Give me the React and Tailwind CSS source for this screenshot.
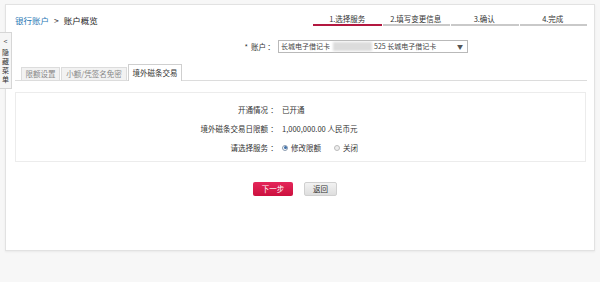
export default function App() {
  const font = { fontFamily: '"Noto Sans CJK SC", "Noto Sans", sans-serif' };
  const steps = ["1.选择服务", "2.填写变更信息", "3.确认", "4.完成"];
  return (
    <div className="relative w-[600px] h-[282px] overflow-hidden bg-[#f7f7f7] pt-[4px] px-[5px] text-[#333]" style={font}>
      {/* side hide-menu tab */}
      <div className="absolute left-0 top-[32px] w-[12px] h-[57px] bg-[#f5f5f5] border border-l-0 border-[#d6d6d6] flex flex-col items-center pt-[4px] text-[7px] leading-[9px] text-[#333] z-10">
        <span className="text-[7px] leading-[8px] text-[#555] mb-[3px]">&lt;</span>
        <span>隐</span>
        <span>藏</span>
        <span>菜</span>
        <span>单</span>
      </div>

      <div className="h-[247px] bg-white border border-[#e2e2e2] shadow-[0_1px_2px_rgba(0,0,0,0.06)]">
        {/* header */}
        <div className="h-[25px] flex items-end justify-between pl-[9px] pr-[7px]">
          <div className="text-[8.5px] leading-[12px] mb-[4px] flex items-center">
            <span className="text-[#2a78b5]">银行账户</span>
            <span className="mx-[5px] text-[#333]">&gt;</span>
            <span className="text-[#222]">账户概览</span>
          </div>
          <div className="flex w-[274px] mb-[4px]">
            {steps.map((s, i) => (
              <div key={s} className="w-[68.5px] flex flex-col items-center">
                <span className="text-[7.5px] leading-[10px] text-[#333]">{s}</span>
                <div className={i === 0 ? "w-full h-[2px] bg-[#b31840]" : "w-full h-[2px] bg-[#c9c9c9] border-l border-white"} />
              </div>
            ))}
          </div>
        </div>

        {/* account row */}
        <div className="mt-[10px] flex items-center h-[13px] text-[7.5px]">
          <div className="w-[260px] text-right"><span className="mr-[3px]">*</span>账户</div>
          <div className="w-[10px] text-center">：</div>
          <div className="ml-[2px] w-[190px] h-[13px] border border-[#b9b9b9] flex items-center pl-[2px] pr-[4px] text-[7px] text-[#444]">
            <span>长城电子借记卡</span>
            <span className="ml-[3px] w-[39px] h-[9px] bg-[#dcdcdc] blur-[0.8px]" />
            <span className="ml-[2px]">525 长城电子借记卡</span>
            <span className="ml-auto text-[6px] text-[#555]">▼</span>
          </div>
        </div>

        {/* tabs */}
        <div className="mt-[12px] ml-[9px] mr-[7px] h-[16px] border-b border-[#dcdcdc] flex items-end pl-[6px] gap-[1px] text-[7.5px]">
          <div className="w-[39px] h-[13px] bg-[#f2f2f2] border border-b-0 border-[#dcdcdc] flex items-center justify-center text-[#888]">限额设置</div>
          <div className="w-[66px] h-[13px] bg-[#f2f2f2] border border-b-0 border-[#dcdcdc] flex items-center justify-center text-[#888]">小额/凭签名免密</div>
          <div className="w-[54px] h-[17px] -mb-[1px] bg-white border border-b-0 border-[#cfcfcf] flex items-center justify-center text-[#333]">境外磁条交易</div>
        </div>

        {/* content box */}
        <div className="mt-[11px] ml-[9px] mr-[8px] h-[70px] border border-[#ececec] pt-[7px] text-[7.5px]">
          <div className="grid grid-cols-[252px_12px_auto] items-center h-[19px]">
            <span className="text-right">开通情况</span>
            <span className="text-center">：</span>
            <span className="ml-[2px]">已开通</span>
          </div>
          <div className="grid grid-cols-[252px_12px_auto] items-center h-[19px]">
            <span className="text-right">境外磁条交易日限额</span>
            <span className="text-center">：</span>
            <span className="ml-[2px]">1,000,000.00 人民币元</span>
          </div>
          <div className="grid grid-cols-[252px_12px_auto] items-center h-[19px]">
            <span className="text-right">请选择服务</span>
            <span className="text-center">：</span>
            <span className="ml-[2px] flex items-center">
              <span className="w-[6px] h-[6px] rounded-full border border-[#8a9bb0] bg-white flex items-center justify-center">
                <span className="w-[3px] h-[3px] rounded-full bg-[#3d6fa8]" />
              </span>
              <span className="ml-[3px]">修改限额</span>
              <span className="ml-[13px] w-[6px] h-[6px] rounded-full border border-[#bcbcbc] bg-[#eeeeee]" />
              <span className="ml-[3px]">关闭</span>
            </span>
          </div>
        </div>

        {/* buttons */}
        <div className="mt-[20px] flex pl-[247px] gap-[11px] text-[7.5px]">
          <div className="w-[40px] h-[14px] rounded-[2px] bg-gradient-to-b from-[#e4265a] to-[#cc0f3e] text-white flex items-center justify-center">下一步</div>
          <div className="w-[33px] h-[14px] rounded-[2px] bg-gradient-to-b from-[#f2f2f2] to-[#dedede] border border-[#d0d0d0] text-[#333] flex items-center justify-center">返回</div>
        </div>
      </div>
    </div>
  );
}
